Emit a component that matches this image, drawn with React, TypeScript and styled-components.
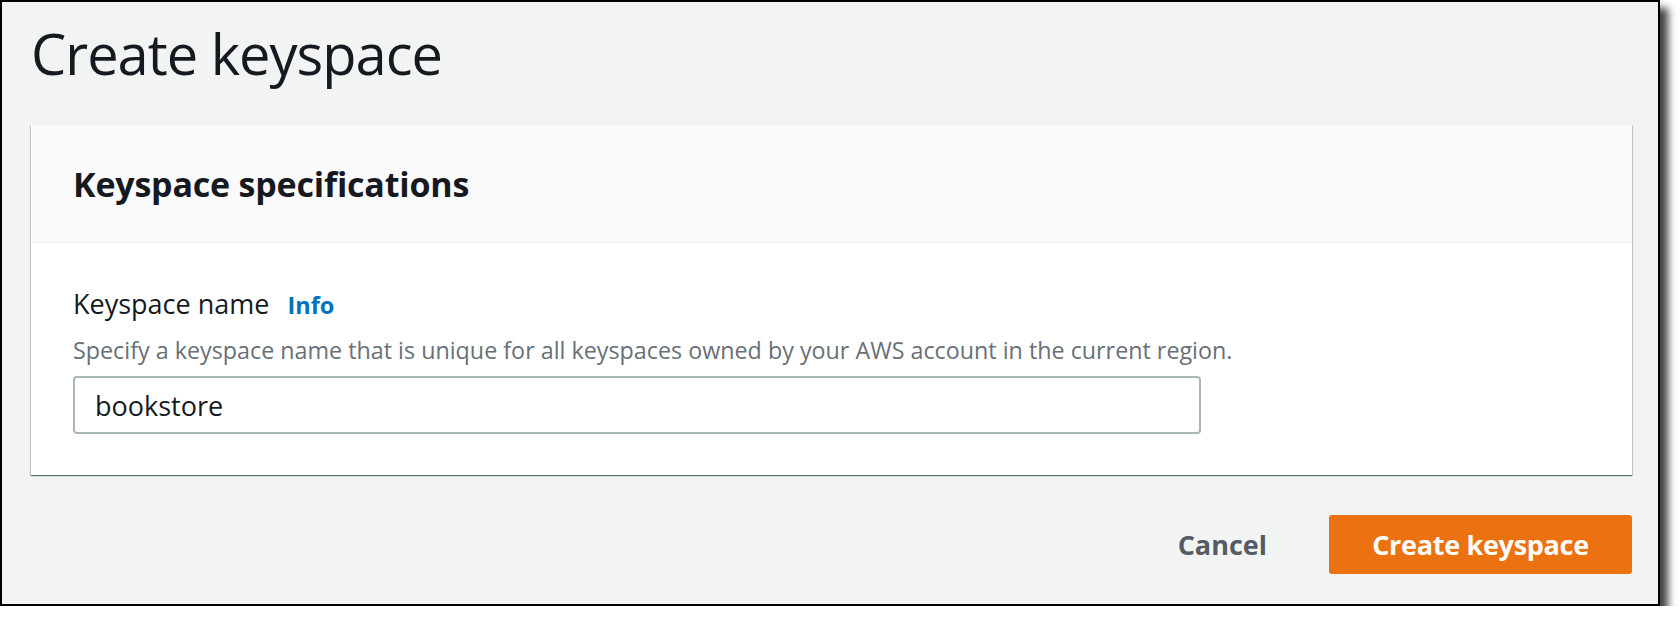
import styled, { createGlobalStyle } from "styled-components";

const GlobalStyle = createGlobalStyle`
  html, body {
    margin: 0;
    padding: 0;
    background: #ffffff;
    font-family: "Open Sans", "Noto Sans", Arial, sans-serif;
    color: #16191f;
  }
  * { box-sizing: border-box; }
`;

const App = () => {
  return (
    <>
      <GlobalStyle />
      <Frame>
        <Title>Create keyspace</Title>
        <Card>
          <CardHeader>
            <h2>Keyspace specifications</h2>
          </CardHeader>
          <CardBody>
            <LabelRow>
              <span>Keyspace name</span>
              <InfoLink href="#">Info</InfoLink>
            </LabelRow>
            <Description>
              Specify a keyspace name that is unique for all keyspaces owned by your AWS account in the current region.
            </Description>
            <TextInput defaultValue="bookstore" />
          </CardBody>
        </Card>
        <Actions>
          <LinkButton>Cancel</LinkButton>
          <PrimaryButton>Create keyspace</PrimaryButton>
        </Actions>
      </Frame>
    </>
  );
};

const Frame = styled.div`
  width: 1660px;
  height: 606px;
  border: 2px solid #000;
  background: #f2f3f3;
  padding: 16px 26px 0 29px;
  box-shadow: 8px 8px 8px rgba(0, 0, 0, 0.75);
`;

const Title = styled.h1`
  margin: 0 0 37px 0;
  font-size: 56px;
  line-height: 70px;
  letter-spacing: -1px;
  font-weight: 400;
  color: #16191f;
`;

const Card = styled.section`
  background: #ffffff;
  box-shadow: 0 1px 1px 0 rgba(0, 28, 36, 0.45), 1px 1px 1px 0 rgba(0, 28, 36, 0.15),
    -1px 1px 1px 0 rgba(0, 28, 36, 0.15);
`;

const CardHeader = styled.header`
  background: #fafafa;
  border-bottom: 1px solid #eaeded;
  padding: 38px 40px 37px 42px;
  h2 {
    margin: 0;
    font-size: 34px;
    line-height: 42px;
    letter-spacing: -0.2px;
    font-weight: 700;
  }
`;

const CardBody = styled.div`
  padding: 46px 42px 41px 42px;
`;

const LabelRow = styled.div`
  display: flex;
  align-items: baseline;
  gap: 18px;
  font-size: 27px;
  line-height: 30px;
  color: #16191f;
`;

const InfoLink = styled.a`
  color: #0073bb;
  font-weight: 700;
  text-decoration: none;
  font-size: 23.5px;
`;

const Description = styled.div`
  margin-top: 15px;
  font-size: 23.3px;
  line-height: 30px;
  color: #687078;
`;

const TextInput = styled.input`
  display: block;
  margin-top: 11px;
  width: 1128px;
  height: 58px;
  border: 2px solid #aab7b8;
  border-radius: 4px;
  padding: 0 20px;
  font-family: inherit;
  font-size: 27px;
  color: #16191f;
  background: #fff;
  outline: none;
`;

const Actions = styled.div`
  display: flex;
  justify-content: flex-end;
  align-items: center;
  gap: 30px;
  margin-top: 40px;
`;

const LinkButton = styled.button`
  background: none;
  border: none;
  padding: 0 32px;
  font-family: inherit;
  font-size: 27px;
  font-weight: 700;
  color: #545b64;
`;

const PrimaryButton = styled.button`
  width: 303px;
  height: 59px;
  background: #ec7211;
  border: none;
  border-radius: 3px;
  font-family: inherit;
  font-size: 27px;
  letter-spacing: -0.3px;
  font-weight: 700;
  color: #ffffff;
`;

export default App;
